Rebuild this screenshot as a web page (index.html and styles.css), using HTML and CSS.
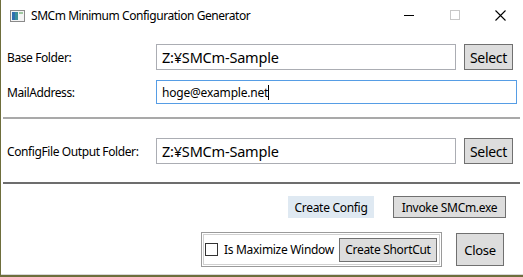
FILE: index.html
```html
<!DOCTYPE html>
<html>
<head>
<meta charset="utf-8">
<link rel="stylesheet" href="styles.css">
</head>
<body>
<div class="window">
  <div class="titlebar">
    <svg class="appicon" width="15" height="12" viewBox="0 0 15 12">
      <rect x="0.5" y="0.5" width="14" height="11" fill="#f4f4f4" stroke="#8a8a8a"/>
      <rect x="2" y="2" width="6" height="8" fill="#3d8f9a"/>
      <rect x="2" y="2" width="3" height="8" fill="#2f6fb0"/>
      <rect x="9" y="2" width="4" height="2" fill="#9fc8a0"/>
    </svg>
    <span class="title">SMCm Minimum Configuration Generator</span>
    <div class="caption">
      <span class="cap cap-min"><svg width="11" height="11" viewBox="0 0 11 11"><path d="M0 5.5H10" stroke="#000" stroke-width="1"/></svg></span>
      <span class="cap cap-max"><svg width="11" height="11" viewBox="0 0 11 11"><rect x="0.5" y="0.5" width="9" height="9" fill="none" stroke="#c8c8c8"/></svg></span>
      <span class="cap cap-close"><svg width="11" height="11" viewBox="0 0 11 11"><path d="M0.5 0.5L10.5 10.5M10.5 0.5L0.5 10.5" stroke="#000" stroke-width="1.1"/></svg></span>
    </div>
  </div>

  <div class="form">
    <div class="row row1">
      <label class="lbl">Base Folder:</label>
      <div class="field big">Z:¥SMCm-Sample</div>
      <button class="btn sel">Select</button>
    </div>
    <div class="row row2">
      <label class="lbl">MailAddress:</label>
      <div class="field small focused">hoge@example.net<span class="caret"></span></div>
    </div>
  </div>

  <div class="sep light"></div>

  <div class="form">
    <div class="row row3">
      <label class="lbl">ConfigFile Output Folder:</label>
      <div class="field big">Z:¥SMCm-Sample</div>
      <button class="btn sel">Select</button>
    </div>
  </div>

  <div class="sep dark"></div>

  <div class="actions">
    <button class="btn create">Create Config</button>
    <button class="btn invoke">Invoke SMCm.exe</button>
  </div>

  <div class="bottom">
    <div class="group">
      <span class="check"></span>
      <span class="checklbl">Is Maximize Window</span>
      <button class="btn shortcut">Create ShortCut</button>
    </div>
    <button class="btn close">Close</button>
  </div>
</div>
</body>
</html>
```

FILE: styles.css
```css
html, body {
  margin: 0;
  padding: 0;
  background: #ffffff;
}
body {
  font-family: "Noto Sans", "Open Sans", sans-serif;
  font-size: 12px;
  color: #000;
}
.window {
  width: 523px;
  height: 277px;
  box-sizing: border-box;
  border-left: 1px solid #6e6e3c;
  position: relative;
  overflow: hidden;
}
.window::after {
  content: "";
  position: absolute;
  left: 0;
  right: 0;
  top: 274px;
  height: 3px;
  background: linear-gradient(#d8d8d8 0 1px, #6e6e3c 1px 3px);
}
.titlebar {
  height: 31px;
  display: flex;
  align-items: center;
}
.appicon {
  margin-left: 9px;
  margin-top: 1px;
}
.title {
  margin-left: 6px;
  font-size: 12px;
  letter-spacing: -0.45px;
  color: #000;
}
.caption {
  margin-left: auto;
  display: flex;
  align-items: center;
  height: 31px;
}
.cap {
  width: 46px;
  height: 31px;
  display: flex;
  align-items: center;
  justify-content: center;
}
.cap svg { display: block; }
.cap-close { width: 44px; margin-right: 1px; }

.form {
  padding-left: 6px;
}
.row {
  display: grid;
  grid-template-columns: 141px 300px 49px;
  column-gap: 8px;
  align-items: center;
}
.row1 { margin-top: 13px; height: 26px; }
.row2 { margin-top: 10px; height: 24px; grid-template-columns: 141px 361px; }
.row3 { margin-top: 19px; height: 26px; }
.lbl {
  font-size: 12px;
  letter-spacing: -0.4px;
}
.field {
  box-sizing: border-box;
  background: #fff;
  border: 1px solid #abadb3;
  display: flex;
  align-items: center;
  padding-left: 5px;
  white-space: nowrap;
}
.field.big {
  height: 26px;
  font-size: 14.5px;
  letter-spacing: -0.2px;
}
.field.small {
  height: 24px;
  font-size: 12px;
  letter-spacing: -0.2px;
}
.field.focused {
  border-color: #569de5;
}
.caret {
  display: inline-block;
  width: 1px;
  height: 15px;
  background: #000;
}
.btn {
  font-family: "Noto Sans", "Open Sans", sans-serif;
  font-size: 12px;
  letter-spacing: -0.3px;
  background: #dddddd;
  border: 1px solid #707070;
  color: #000;
  padding: 0;
  margin: 0;
  box-sizing: border-box;
}
.btn.sel {
  height: 26px;
  width: 49px;
  font-size: 14px;
  letter-spacing: -0.3px;
}
.sep.light {
  margin: 13px 3px 0 2px;
  border-top: 2px solid #a9a9a9;
  height: 0;
}
.sep.dark {
  margin: 18px 3px 0 2px;
  border-top: 2px solid #6d6d6d;
  height: 0;
}
.actions {
  margin-top: 12px;
  display: flex;
  justify-content: flex-end;
  gap: 19px;
  padding-right: 17px;
}
.btn.create {
  width: 86px;
  height: 22px;
  background: #dfe9f2;
  border-color: #dfe9f2;
}
.btn.invoke {
  width: 113px;
  height: 22px;
}
.bottom {
  margin-top: 14px;
  display: flex;
  align-items: center;
  padding-left: 200px;
}
.group {
  box-sizing: border-box;
  width: 241px;
  height: 35px;
  border: 1px solid #9a9a9a;
  box-shadow: inset 0 0 0 1px #ffffff, inset 0 0 0 2px #d0d0d0;
  display: flex;
  align-items: center;
  padding-left: 3px;
}
.check {
  width: 13px;
  height: 13px;
  box-sizing: border-box;
  border: 1px solid #333;
  background: #fff;
}
.checklbl {
  margin-left: 6px;
  font-size: 12px;
  letter-spacing: -0.3px;
}
.btn.shortcut {
  margin-left: 5px;
  width: 98px;
  height: 24px;
}
.btn.close {
  margin-left: 14px;
  width: 48px;
  height: 33px;
  font-size: 13px;
}
```
